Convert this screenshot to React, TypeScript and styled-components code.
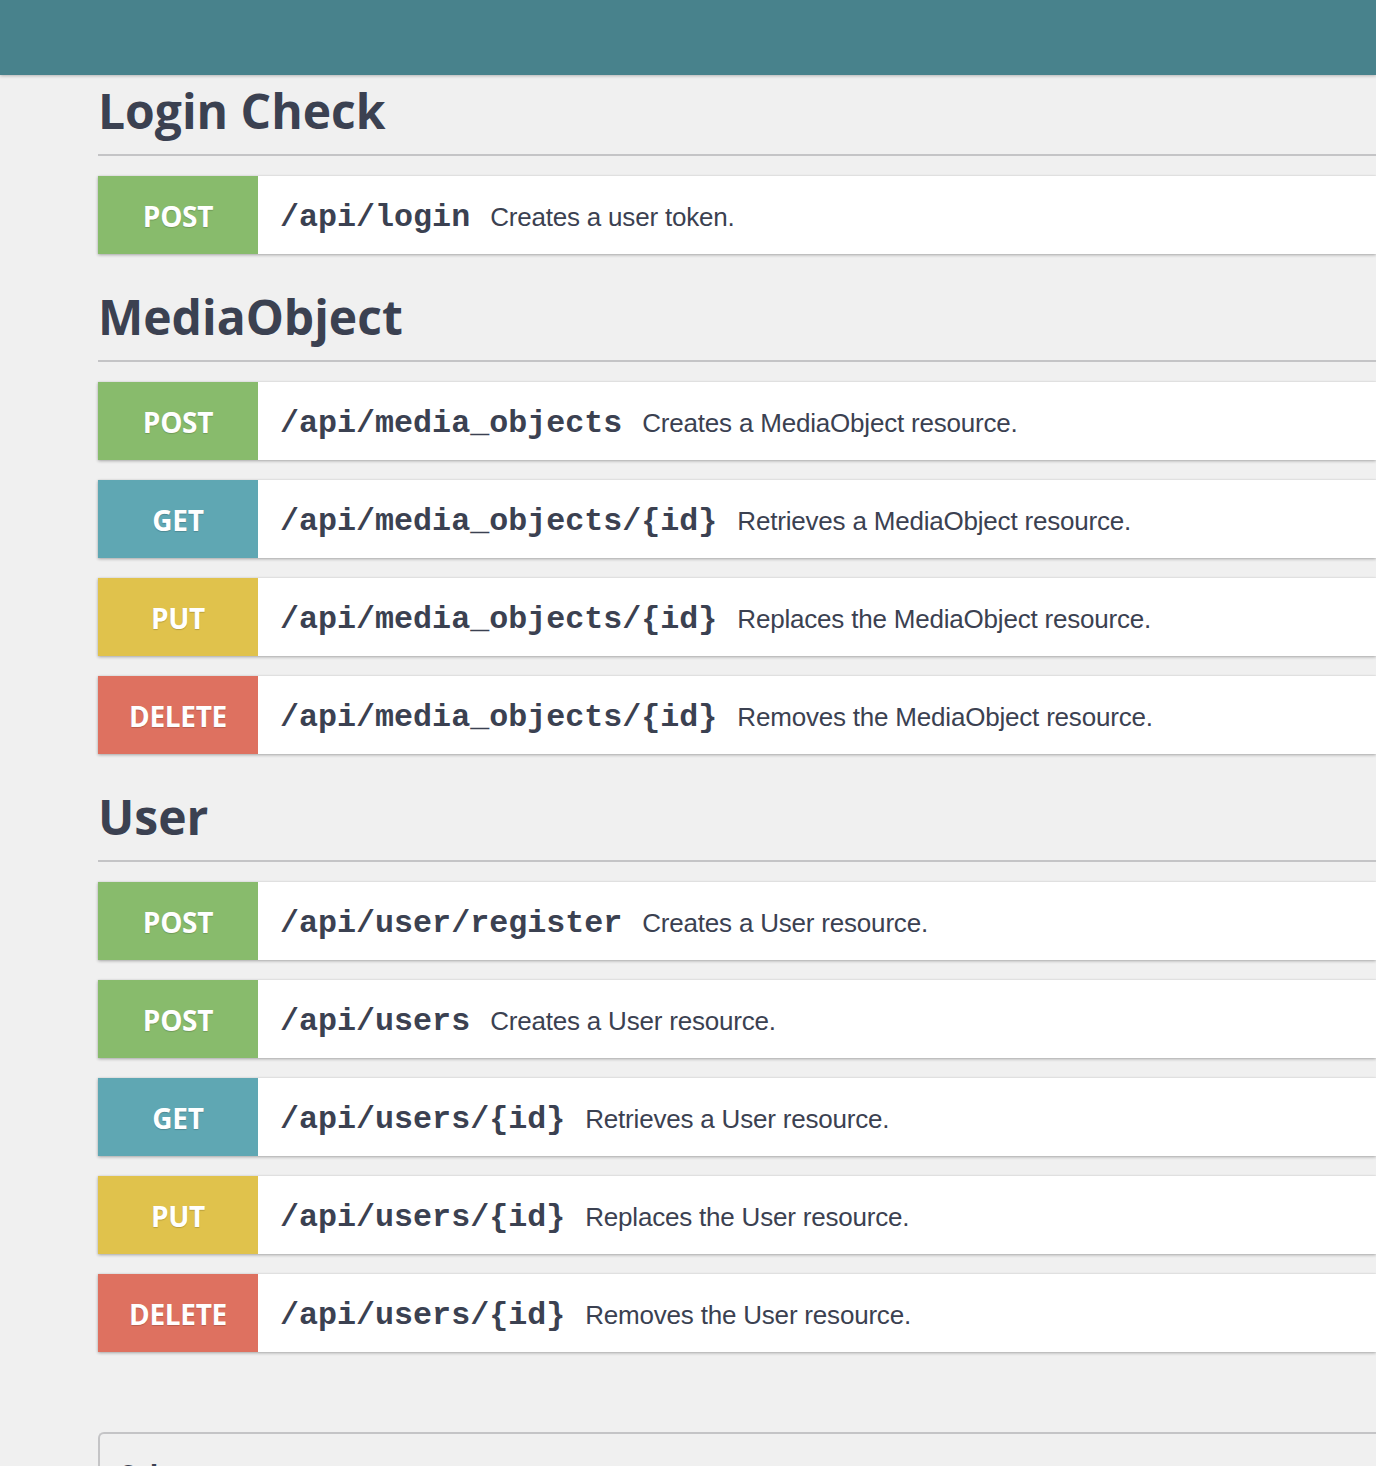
import styled, { createGlobalStyle } from "styled-components";

const GlobalStyle = createGlobalStyle`
  html, body {
    margin: 0;
    padding: 0;
    background: #f0f0f0;
    overflow-x: hidden;
  }
  body {
    font-family: "Open Sans", "Liberation Sans", sans-serif;
    color: #3b4151;
  }
`;

type Method = "POST" | "GET" | "PUT" | "DELETE";

const methodColors: Record<Method, string> = {
  POST: "#88bb6c",
  GET: "#5fa7b3",
  PUT: "#e0c24c",
  DELETE: "#de7160",
};

const TopBar = styled.header`
  height: 75px;
  background: #48828c;
  box-shadow: 0 1px 3px rgba(0, 0, 0, 0.25);
`;

const Main = styled.main`
  padding-left: 98px;
`;

const Section = styled.section`
  margin-bottom: 27px;
`;

const SectionTitle = styled.h2`
  margin: 0 0 20px;
  padding: 6px 0 13px;
  font-family: "Open Sans", sans-serif;
  font-size: 48px;
  font-weight: 700;
  line-height: 60px;
  color: #3b4151;
  border-bottom: 2px solid #c4c4c6;
`;

const Operations = styled.div`
  display: flex;
  flex-direction: column;
  gap: 20px;
`;

const Operation = styled.div`
  display: flex;
  align-items: center;
  height: 78px;
  background: #fff;
  box-shadow: 0 1px 3px rgba(0, 0, 0, 0.3), 0 0 1px rgba(0, 0, 0, 0.1);
`;

const Badge = styled.span<{ $method: Method }>`
  flex: 0 0 160px;
  height: 100%;
  display: flex;
  align-items: center;
  justify-content: center;
  padding-top: 2px;
  box-sizing: border-box;
  background: ${(p) => methodColors[p.$method]};
  color: #fff;
  font-family: "Open Sans", sans-serif;
  font-weight: 700;
  font-size: 28px;
  letter-spacing: -0.3px;
  text-shadow: 0 1px 1px rgba(0, 0, 0, 0.18);
`;

const Path = styled.span`
  margin-left: 22px;
  padding-top: 5px;
  font-family: "Liberation Mono", "Courier New", monospace;
  font-weight: 700;
  font-size: 31.7px;
  color: #3b4151;
  white-space: nowrap;
`;

const Summary = styled.span`
  margin-left: 20px;
  padding-top: 4px;
  font-family: "Liberation Sans", Arial, sans-serif;
  font-size: 26px;
  letter-spacing: -0.2px;
  color: #3b4151;
  white-space: nowrap;
`;

const ModelsBox = styled.div`
  margin-top: 80px;
  height: 120px;
  border: 2px solid #c4c4c6;
  border-right: none;
  border-radius: 6px 0 0 0;
  padding: 22px 20px 0;
  font-family: "Open Sans", sans-serif;
  font-size: 28px;
  font-weight: 700;
`;

type Op = { method: Method; path: string; summary: string };

const sections: { title: string; ops: Op[] }[] = [
  {
    title: "Login Check",
    ops: [{ method: "POST", path: "/api/login", summary: "Creates a user token." }],
  },
  {
    title: "MediaObject",
    ops: [
      { method: "POST", path: "/api/media_objects", summary: "Creates a MediaObject resource." },
      { method: "GET", path: "/api/media_objects/{id}", summary: "Retrieves a MediaObject resource." },
      { method: "PUT", path: "/api/media_objects/{id}", summary: "Replaces the MediaObject resource." },
      { method: "DELETE", path: "/api/media_objects/{id}", summary: "Removes the MediaObject resource." },
    ],
  },
  {
    title: "User",
    ops: [
      { method: "POST", path: "/api/user/register", summary: "Creates a User resource." },
      { method: "POST", path: "/api/users", summary: "Creates a User resource." },
      { method: "GET", path: "/api/users/{id}", summary: "Retrieves a User resource." },
      { method: "PUT", path: "/api/users/{id}", summary: "Replaces the User resource." },
      { method: "DELETE", path: "/api/users/{id}", summary: "Removes the User resource." },
    ],
  },
];

export default function App() {
  return (
    <>
      <GlobalStyle />
      <TopBar />
      <Main>
        {sections.map((s) => (
          <Section key={s.title}>
            <SectionTitle>{s.title}</SectionTitle>
            <Operations>
              {s.ops.map((op, i) => (
                <Operation key={i}>
                  <Badge $method={op.method}>{op.method}</Badge>
                  <Path>{op.path}</Path>
                  <Summary>{op.summary}</Summary>
                </Operation>
              ))}
            </Operations>
          </Section>
        ))}
        <ModelsBox>Schemas</ModelsBox>
      </Main>
    </>
  );
}
